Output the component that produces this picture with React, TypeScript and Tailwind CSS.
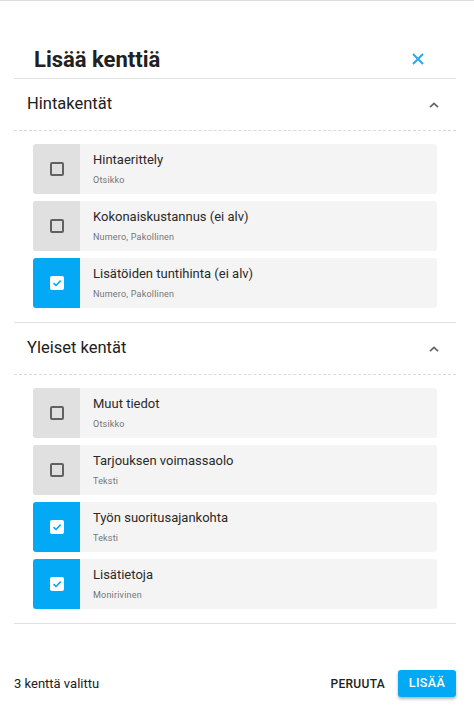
import React from "react";

type Field = { title: string; sub: string; checked: boolean };

const sections: { name: string; fields: Field[] }[] = [
  {
    name: "Hintakentät",
    fields: [
      { title: "Hintaerittely", sub: "Otsikko", checked: false },
      { title: "Kokonaiskustannus (ei alv)", sub: "Numero, Pakollinen", checked: false },
      { title: "Lisätöiden tuntihinta (ei alv)", sub: "Numero, Pakollinen", checked: true },
    ],
  },
  {
    name: "Yleiset kentät",
    fields: [
      { title: "Muut tiedot", sub: "Otsikko", checked: false },
      { title: "Tarjouksen voimassaolo", sub: "Teksti", checked: false },
      { title: "Työn suoritusajankohta", sub: "Teksti", checked: true },
      { title: "Lisätietoja", sub: "Monirivinen", checked: true },
    ],
  },
];

function Checkbox({ checked }: { checked: boolean }) {
  if (checked) {
    return (
      <div className="w-[14px] h-[14px] rounded-[2px] bg-white flex items-center justify-center">
        <svg width="10" height="10" viewBox="0 0 10 10" fill="none">
          <path d="M1.5 5.2 L4 7.5 L8.7 2.6" stroke="#03a9f4" strokeWidth="1.6" />
        </svg>
      </div>
    );
  }
  return <div className="w-[14px] h-[14px] rounded-[2px] border-2 border-[#616161]" />;
}

function FieldRow({ field }: { field: Field }) {
  return (
    <div className="flex h-[50px] rounded-[3px] overflow-hidden bg-[#f4f4f4]">
      <div
        className={
          field.checked
            ? "w-[47px] shrink-0 flex items-center justify-center bg-[#03a9f4]"
            : "w-[47px] shrink-0 flex items-center justify-center bg-[#e0e0e0]"
        }
      >
        <Checkbox checked={field.checked} />
      </div>
      <div className="pl-[13px] pt-[8px]">
        <div className="text-[13px] leading-4 text-[#2a2a2a]">{field.title}</div>
        <div className="mt-[6px] text-[9px] leading-3 text-[#757575] tracking-[0.2px]">{field.sub}</div>
      </div>
    </div>
  );
}

export default function App() {
  return (
    <div
      className="w-[474px] h-[710px] bg-white border-t border-[#dcdcdc] pl-[14px] pr-[18px] flex flex-col"
      style={{ fontFamily: "Roboto, 'Liberation Sans', sans-serif" }}
    >
      {/* Header */}
      <div className="pt-[43px] pb-[4px] border-b border-[#e0e0e0]">
        <div className="h-[30px] flex items-center justify-between pl-[20px] pr-[32px]">
          <h1 className="text-[22px] font-bold text-[#212121]">Lisää kenttiä</h1>
          <svg width="12" height="12" viewBox="0 0 12 12" fill="none">
            <path d="M1 1 L11 11 M11 1 L1 11" stroke="#29a8f0" strokeWidth="2" />
          </svg>
        </div>
      </div>

      {sections.map((s) => (
        <div key={s.name} className="border-b border-[#e0e0e0]">
          <div className="h-[52px] flex items-center justify-between pl-[13px] pr-[17px] border-b border-dashed border-[#dadada]">
            <span className="text-[16.5px] text-[#212121]">{s.name}</span>
            <svg width="10" height="6" viewBox="0 0 10 6" fill="none">
              <path d="M1 5.2 L5 1.4 L9 5.2" stroke="#666" strokeWidth="1.8" />
            </svg>
          </div>
          <div className="pt-[13px] pb-[14px] px-[19px] flex flex-col gap-[7px]">
            {s.fields.map((f) => (
              <FieldRow key={f.title} field={f} />
            ))}
          </div>
        </div>
      ))}

      {/* Footer */}
      <div className="mt-[46px] h-[27px] flex items-center justify-between">
        <span className="text-[13px] text-[#212121]">3 kenttä valittu</span>
        <div className="flex items-center gap-[13px]">
          <button className="text-[12px] font-medium tracking-[0.3px] text-[#212121]">PERUUTA</button>
          <button className="w-[58px] h-[27px] rounded-[3px] bg-[#03a9f4] text-white text-[12.5px] font-medium tracking-[0.4px] shadow-[0_2px_3px_rgba(0,0,0,0.3)]">
            LISÄÄ
          </button>
        </div>
      </div>
    </div>
  );
}
